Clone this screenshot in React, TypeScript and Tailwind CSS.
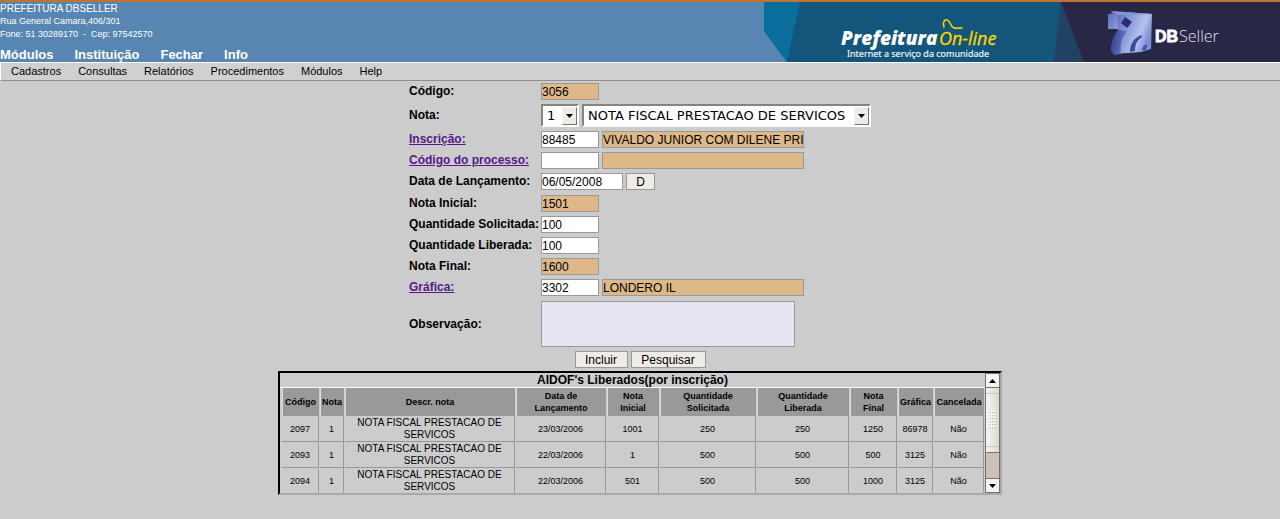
import React from "react";

const mainMenu = ["Módulos", "Instituição", "Fechar", "Info"];
const subMenu = ["Cadastros", "Consultas", "Relatórios", "Procedimentos", "Módulos", "Help"];

const columns = [
  { label: "Código", width: "w-[37px]" },
  { label: "Nota", width: "w-[24px]" },
  { label: "Descr. nota", width: "w-[170px]" },
  { label: "Data de Lançamento", width: "w-[90px]" },
  { label: "Nota Inicial", width: "w-[52px]" },
  { label: "Quantidade Solicitada", width: "w-[96px]" },
  { label: "Quantidade Liberada", width: "w-[92px]" },
  { label: "Nota Final", width: "w-[47px]" },
  { label: "Gráfica", width: "w-[35px]" },
  { label: "Cancelada", width: "w-[50px]" },
];

const records = [
  ["2097", "1", "NOTA FISCAL PRESTACAO DE SERVICOS", "23/03/2006", "1001", "250", "250", "1250", "86978", "Não"],
  ["2093", "1", "NOTA FISCAL PRESTACAO DE SERVICOS", "22/03/2006", "1", "500", "500", "500", "3125", "Não"],
  ["2094", "1", "NOTA FISCAL PRESTACAO DE SERVICOS", "22/03/2006", "501", "500", "500", "1000", "3125", "Não"],
];

const box = "h-[17px] border border-[#999] text-[12px] text-black outline-none";

function Field({ id, value, width = "w-[58px]", readOnly = false, label }: {
  id: string;
  value: string;
  width?: string;
  readOnly?: boolean;
  label?: string;
}) {
  return (
    <input
      id={id}
      aria-label={label}
      defaultValue={value}
      readOnly={readOnly}
      className={`${box} leading-[15px] ${width} ${readOnly ? "bg-[#deb887]" : "bg-white"}`}
    />
  );
}

function Row({ id, label, link = false, children }: {
  id: string;
  label: string;
  link?: boolean;
  children: React.ReactNode;
}) {
  return (
    <div className="flex items-center">
      <label htmlFor={id} className="w-[132px] shrink-0 text-[12px] leading-[15px] font-bold whitespace-nowrap">
        {link ? <a href="#" className="text-[#551a8b] underline">{label}</a> : label}
      </label>
      <div className="flex gap-[3px]">{children}</div>
    </div>
  );
}

function Select({ id, value, width, label }: { id: string; value: string; width: string; label?: string }) {
  return (
    <div className={`relative ${width}`}>
      <select
        id={id}
        aria-label={label}
        className="block h-[23px] w-full appearance-none border-2 border-t-[#85857d] border-r-white border-b-white border-l-[#85857d] bg-white pl-1 font-['DejaVu_Sans',sans-serif] text-[13px] leading-[19px] text-black outline-none"
      >
        <option>{value}</option>
      </select>
      <span className="pointer-events-none absolute top-[3px] right-[2px] flex h-[18px] w-[15px] items-center justify-center border border-t-[#f5f3f0] border-r-[#777] border-b-[#777] border-l-[#f5f3f0] bg-[#efebe7]">
        <svg width="7" height="4" viewBox="0 0 7 4"><path d="M0 0h7L3.500 4z" /></svg>
      </span>
    </div>
  );
}

function Button({ children, width }: { children: string; width: string }) {
  return (
    <button type="button" className={`${box} ${width} bg-[#efebe7] pt-px leading-[14px]`}>
      {children}
    </button>
  );
}

function Banner() {
  return (
    <svg className="h-[60px] w-[516px] shrink-0" viewBox="0 0 516 60" role="img" aria-label="Prefeitura On-line DBSeller">
      <defs>
        <linearGradient id="face" x1="0" y1="0" x2="1" y2="0.4">
          <stop offset="0" stopColor="#4a59ae" />
          <stop offset="0.45" stopColor="#8396d8" />
          <stop offset="0.8" stopColor="#b4c4ee" />
          <stop offset="1" stopColor="#7e90d6" />
        </linearGradient>
        <linearGradient id="block" x1="0" y1="0" x2="1" y2="1">
          <stop offset="0" stopColor="#5a6cba" />
          <stop offset="1" stopColor="#8ea0dc" />
        </linearGradient>
        <linearGradient id="shade" x1="0" y1="0" x2="1" y2="0.3">
          <stop offset="0" stopColor="#303c8a" />
          <stop offset="1" stopColor="#6878c2" />
        </linearGradient>
      </defs>
      <path d="M0 0H516V60H23L0 29z" fill="#14557b" />
      <path d="M0 0H36L23 60L0 29z" fill="#0a6e9d" />
      <path d="M297 0L290 60H321z" fill="#224263" />
      <path d="M297 0H516V60H320z" fill="#282746" />
      <text x="77" y="43" fill="#fff" fontFamily="Open Sans, sans-serif" fontSize="19" fontWeight="800" fontStyle="italic">Prefeitura</text>
      <text x="175" y="43" fill="#f3d900" stroke="#f3d900" strokeWidth="0.300" fontFamily="Open Sans, sans-serif" fontSize="18" fontStyle="italic">On-line</text>
      <path d="M180 25C178 18 183 15 186 21C189 28 192 26 198 26" fill="none" stroke="#f3d900" strokeWidth="1.600" strokeLinecap="round" />
      <text x="83" y="55" fill="#e5f1f8" stroke="#e5f1f8" strokeWidth="0.200" fontFamily="Noto Sans, sans-serif" fontSize="9">Internet a serviço da comunidade</text>
      <path d="M347 9L388 12L387 47L377 50L350 52L347 48C348 40 350 34 354 28z" fill="url(#face)" />
      <path d="M354 28L363 29C357 36 356 44 357 52L350 53L347 48C347 40 350 34 354 28z" fill="url(#shade)" />
      <path d="M344 12L353 11L354 27L344 27z" fill="url(#block)" />
      <path d="M347 9L388 12L354 13z" fill="#8494d0" />
      <path d="M361 15L368 20L363 26L357 21z" fill="#2b2a72" />
      <path d="M366 50C366 42 370 36 377 33L378 35C372 39 371 44 371 49z" fill="#3c4a9c" />
      <path d="M378 48C378 45 380 43 383 42C384 44 382 46 382 48z" fill="#4856a6" />
      <text x="391" y="40" fill="#fff" stroke="#fff" strokeWidth="0.800" fontFamily="Liberation Sans, sans-serif" fontSize="16" fontWeight="700">DB</text>
      <text x="415" y="40" fill="#e2e2ee" fontFamily="Open Sans, sans-serif" fontSize="16" fontWeight="300">Seller</text>
    </svg>
  );
}

function Scrollbar() {
  return (
    <div className="flex w-[15px] shrink-0 flex-col border-x border-[#7c7064] bg-[#cbc1b6]">
      <button type="button" aria-label="Rolar para cima" className="flex h-[15px] items-center justify-center border-y border-[#7c7064] bg-[#f5f3f0]">
        <svg width="7" height="4" viewBox="0 0 7 4"><path d="M0 4h7L3.500 0z" /></svg>
      </button>
      <div className="flex h-[65px] items-center justify-center border-b border-[#7c7064] bg-linear-to-r from-[#f7f5f2] to-[#ddd8d1]">
        <div className="flex h-[54px] w-full items-center justify-center border-y border-[#cdc6be]">
          <svg width="9" height="18" viewBox="0 0 9 18">
            {[0, 3, 6, 9, 12, 15].map((y) =>
              [0, 3, 6].map((x) => (
                <g key={`${x}-${y}`}>
                  <rect x={x + 1} y={y + 1} width="1" height="1" fill="#bdb5ac" />
                  <rect x={x} y={y} width="2" height="1" fill="#fff" />
                </g>
              ))
            )}
          </svg>
        </div>
      </div>
      <div className="grow" />
      <button type="button" aria-label="Rolar para baixo" className="flex h-[15px] items-center justify-center border-y border-[#7c7064] bg-[#f5f3f0]">
        <svg width="7" height="4" viewBox="0 0 7 4"><path d="M0 0h7L3.500 4z" /></svg>
      </button>
    </div>
  );
}

export default function App() {
  return (
    <div className="min-h-screen bg-[#ccc] font-['Liberation_Sans',Arial,sans-serif] text-black">
      <header className="flex justify-between border-t-2 border-[#bd7435] bg-[#5786b2] text-white">
        <div className="flex flex-col justify-between">
          <address className="text-[9px] leading-[13px] whitespace-pre not-italic">
            <p className="text-[10px] leading-[13px]">PREFEITURA DBSELLER</p>
            <p>Rua General Camara,406/301</p>
            <p>{"Fone: 51 30289170  -  Cep: 97542570"}</p>
          </address>
          <nav className="flex gap-[21px] text-[13px] leading-[15px] font-bold">
            {mainMenu.map((item) => <a key={item} href="#">{item}</a>)}
          </nav>
        </div>
        <Banner />
      </header>
      <nav className="flex h-[19px] gap-[17px] border-t border-b border-l border-t-white border-b-[#919191] border-l-white bg-[#d0d0d0] pl-[10px] text-[11px] leading-[17px]">
        {subMenu.map((item) => <a key={item} href="#">{item}</a>)}
      </nav>

      <main className="flex flex-col items-center pt-[2px]">
        <form className="flex flex-col gap-1">
          <Row id="codigo" label="Código:"><Field id="codigo" value="3056" readOnly /></Row>
          <Row id="nota" label="Nota:">
            <Select id="nota" value="1" width="w-[38px]" />
            <Select id="nota-descr" value="NOTA FISCAL PRESTACAO DE SERVICOS" width="w-[289px]" label="Descrição da nota" />
          </Row>
          <Row id="inscricao" label="Inscrição:" link>
            <Field id="inscricao" value="88485" />
            <Field id="inscricao-nome" value="VIVALDO JUNIOR COM DILENE PRI" width="w-[202px]" readOnly label="Nome da inscrição" />
          </Row>
          <Row id="processo" label="Código do processo:" link>
            <Field id="processo" value="" />
            <Field id="processo-nome" value="" width="w-[202px]" readOnly label="Nome do processo" />
          </Row>
          <div className="pb-px">
            <Row id="data" label="Data de Lançamento:">
              <Field id="data" value="06/05/2008" width="w-[82px]" />
              <Button width="w-[29px]">D</Button>
            </Row>
          </div>
          <Row id="inicial" label="Nota Inicial:"><Field id="inicial" value="1501" readOnly /></Row>
          <Row id="solicitada" label="Quantidade Solicitada:"><Field id="solicitada" value="100" /></Row>
          <Row id="liberada" label="Quantidade Liberada:"><Field id="liberada" value="100" /></Row>
          <Row id="final" label="Nota Final:"><Field id="final" value="1600" readOnly /></Row>
          <div className="pb-px">
            <Row id="grafica" label="Gráfica:" link>
              <Field id="grafica" value="3302" />
              <Field id="grafica-nome" value="LONDERO IL" width="w-[202px]" readOnly label="Nome da gráfica" />
            </Row>
          </div>
          <Row id="obs" label="Observação:">
            <textarea id="obs" className="block h-[46px] w-[254px] resize-none border border-[#999] bg-[#e6e4f1] text-[12px] outline-none" />
          </Row>
          <div className="flex justify-center gap-[3px]">
            <Button width="w-[53px]">Incluir</Button>
            <Button width="w-[75px]">Pesquisar</Button>
          </div>
        </form>

        <section className="mt-[3px] flex h-[124px] w-[724px] border-2 border-t-black border-r-[#a9a9a9] border-b-[#a9a9a9] border-l-black">
          <div className="grow overflow-hidden">
            <h2 className="h-[15px] border-b border-white text-center text-[12px] leading-[14px] font-bold">AIDOF's Liberados(por inscrição)</h2>
            <table className="ml-px w-[704px] table-fixed border-separate border-spacing-x-px border-spacing-y-0 text-center text-[9px] leading-[12px]">
              <colgroup>
                {columns.map((c) => <col key={c.label} className={c.width} />)}
              </colgroup>
              <thead>
                <tr className="h-[28px]">
                  {columns.map((c) => (
                    <th key={c.label} className="border-x border-l-[#ddd] border-r-[#999] bg-[#999] p-0">
                      <span className={c.label.includes(" ") && !c.label.startsWith("Descr") ? "block px-2" : "-mx-1 block whitespace-nowrap"}>{c.label}</span>
                    </th>
                  ))}
                </tr>
              </thead>
              <tbody>
                {records.map((r) => (
                  <tr key={r[0]} className="h-[26px]">
                    {r.map((cell, i) => (
                      <td key={i} className="border-r border-b border-[#999] p-0">
                        <span className={i === 2 ? "block px-3 text-[10px] leading-[12px]" : ""}>{cell}</span>
                      </td>
                    ))}
                  </tr>
                ))}
              </tbody>
            </table>
          </div>
          <Scrollbar />
        </section>
      </main>
    </div>
  );
}
